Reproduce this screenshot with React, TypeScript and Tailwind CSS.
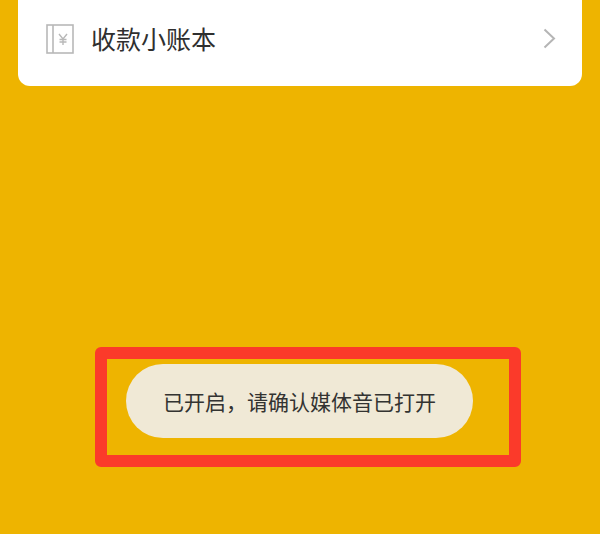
export default function App() {
  return (
    <div className="h-[534px] w-[600px] overflow-hidden bg-[#eeb400] font-['Noto_Sans_CJK_SC',sans-serif]">
      <div className="mx-[18px] flex h-[86px] items-center rounded-b-[12px] bg-white pb-[9px] pl-[28px] pr-[26px]">
        <LedgerIcon />
        <span className="ml-[17px] text-[25px] leading-none text-[#2f2f2f]">收款小账本</span>
        <svg className="ml-auto" width="13" height="21" viewBox="0 0 13 21" fill="none">
          <path d="M1.5 1.5 L11 10.5 L1.5 19.5" stroke="#b5b5b5" strokeWidth="2" />
        </svg>
      </div>

      <div className="ml-[95px] mt-[261px] h-[120px] w-[426px] rounded-[6px] border-[12px] border-[#fb3a2a] pl-[19px] pt-[5px]">
        <div className="flex h-[74px] w-[347px] items-center justify-center rounded-full bg-[#f0e9d6] text-[21px] leading-none text-[#333331]">
          已开启，请确认媒体音已打开
        </div>
      </div>
    </div>
  );
}

function LedgerIcon() {
  return (
    <svg width="28" height="30" viewBox="0 0 28 30" fill="none">
      <rect x="1" y="1" width="26" height="28" stroke="#b8b8b8" strokeWidth="1.6" />
      <path d="M7 1 V29" stroke="#b8b8b8" strokeWidth="1.6" />
      <path
        d="M13 10 L17 15 L21 10 M17 15 V21 M13.5 15.5 H20.5 M13.5 18 H20.5"
        stroke="#b8b8b8"
        strokeWidth="1.4"
      />
    </svg>
  );
}
